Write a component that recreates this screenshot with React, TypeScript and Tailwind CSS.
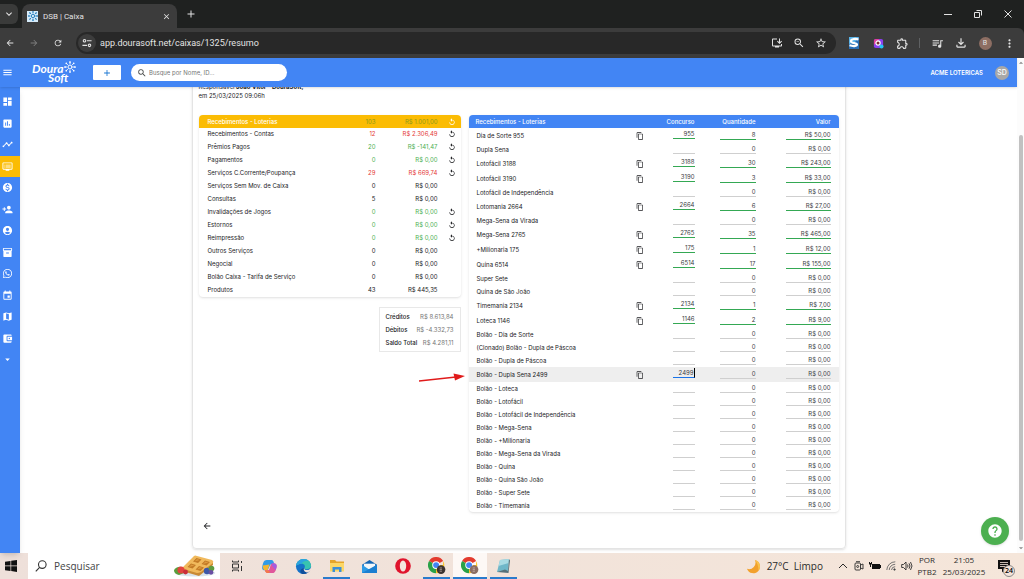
import { useState } from 'react';
import type { ReactNode } from 'react';
import {
  MdAccountBalanceWallet,
  MdAccountCircle,
  MdArrowBack,
  MdArrowDropDown,
  MdArrowDropUp,
  MdArrowForward,
  MdAssessment,
  MdClose,
  MdContentCopy,
  MdDashboard,
  MdDvr,
  MdEvent,
  MdHelp,
  MdInstallDesktop,
  MdInventory2,
  MdKeyboardArrowDown,
  MdMap,
  MdMenu,
  MdMonetizationOn,
  MdMoreVert,
  MdOutlineExtension,
  MdOutlineFileDownload,
  MdPersonAdd,
  MdQueueMusic,
  MdRefresh,
  MdReplay,
  MdSearch,
  MdStarOutline,
  MdTimeline,
  MdWhatsapp,
  MdZoomOut,
  MdAdd,
} from 'react-icons/md';
import clsx from 'clsx';

type Tone = 'header' | 'red' | 'green' | 'plain';

interface SummaryRow {
  name: string;
  qty: string;
  value: string;
  tone: Tone;
  replay?: boolean;
}

interface GameRow {
  name: string;
  contest?: string;
  qty?: string;
  value?: string;
  active?: boolean;
}

const summary: SummaryRow[] = [
  { name: 'Recebimentos - Contas', qty: '12', value: 'R$ 2.306,49', tone: 'red', replay: true },
  { name: 'Prêmios Pagos', qty: '20', value: 'R$ -141,47', tone: 'green', replay: true },
  { name: 'Pagamentos', qty: '0', value: 'R$ 0,00', tone: 'green', replay: true },
  { name: 'Serviços C.Corrente/Poupança', qty: '29', value: 'R$ 669,74', tone: 'red', replay: true },
  { name: 'Serviços Sem Mov. de Caixa', qty: '0', value: 'R$ 0,00', tone: 'plain' },
  { name: 'Consultas', qty: '5', value: 'R$ 0,00', tone: 'plain' },
  { name: 'Invalidações de Jogos', qty: '0', value: 'R$ 0,00', tone: 'green', replay: true },
  { name: 'Estornos', qty: '0', value: 'R$ 0,00', tone: 'green', replay: true },
  { name: 'Reimpressão', qty: '0', value: 'R$ 0,00', tone: 'green', replay: true },
  { name: 'Outros Serviços', qty: '0', value: 'R$ 0,00', tone: 'plain' },
  { name: 'Negocial', qty: '0', value: 'R$ 0,00', tone: 'plain' },
  { name: 'Bolão Caixa - Tarifa de Serviço', qty: '0', value: 'R$ 0,00', tone: 'plain' },
  { name: 'Produtos', qty: '43', value: 'R$ 445,35', tone: 'plain' },
];

const games: GameRow[] = [
  { name: 'Dia de Sorte 955', contest: '955', qty: '8', value: 'R$ 50,00' },
  { name: 'Dupla Sena' },
  { name: 'Lotofácil 3188', contest: '3188', qty: '30', value: 'R$ 243,00' },
  { name: 'Lotofácil 3190', contest: '3190', qty: '3', value: 'R$ 33,00' },
  { name: 'Lotofácil de Independência' },
  { name: 'Lotomania 2664', contest: '2664', qty: '6', value: 'R$ 27,00' },
  { name: 'Mega-Sena da Virada' },
  { name: 'Mega-Sena 2765', contest: '2765', qty: '35', value: 'R$ 465,00' },
  { name: '+Milionaria 175', contest: '175', qty: '1', value: 'R$ 12,00' },
  { name: 'Quina 6514', contest: '6514', qty: '17', value: 'R$ 155,00' },
  { name: 'Super Sete' },
  { name: 'Quina de São João' },
  { name: 'Timemania 2134', contest: '2134', qty: '1', value: 'R$ 7,00' },
  { name: 'Loteca 1146', contest: '1146', qty: '2', value: 'R$ 9,00' },
  { name: 'Bolão - Dia de Sorte' },
  { name: '(Clonado) Bolão - Dupla de Páscoa' },
  { name: 'Bolão - Dupla de Páscoa' },
  { name: 'Bolão - Dupla Sena 2499', contest: '2499', active: true },
  { name: 'Bolão - Loteca' },
  { name: 'Bolão - Lotofácil' },
  { name: 'Bolão - Lotofácil de Independência' },
  { name: 'Bolão - Mega-Sena' },
  { name: 'Bolão - +Milionaria' },
  { name: 'Bolão - Mega-Sena da Virada' },
  { name: 'Bolão - Quina' },
  { name: 'Bolão - Quina São João' },
  { name: 'Bolão - Super Sete' },
  { name: 'Bolão - Timemania' },
];

const menu = [
  { label: 'Painel', icon: MdDashboard },
  { label: 'Relatórios', icon: MdAssessment },
  { label: 'Desempenho', icon: MdTimeline },
  { label: 'Caixas', icon: MdDvr },
  { label: 'Financeiro', icon: MdMonetizationOn },
  { label: 'Novo cliente', icon: MdPersonAdd },
  { label: 'Conta', icon: MdAccountCircle },
  { label: 'Estoque', icon: MdInventory2 },
  { label: 'WhatsApp', icon: MdWhatsapp },
  { label: 'Agenda', icon: MdEvent },
  { label: 'Mapa', icon: MdMap },
  { label: 'Carteira', icon: MdAccountBalanceWallet },
  { label: 'Mais', icon: MdArrowDropDown },
];

const toneClass: Record<Tone, string> = {
  header: 'text-[#8a9a1c]',
  red: 'text-[#e53935]',
  green: 'text-[#4caf50]',
  plain: 'text-[#202124]',
};

function Sun({ className }: { className?: string }) {
  return (
    <svg viewBox="0 0 24 24" className={className} fill="none" stroke="currentColor" strokeWidth="2" strokeLinecap="round">
      <circle cx="12" cy="12" r="4" />
      <path d="M12 5V2M12 22v-3M5 12H2M22 12h-3M7 7 4.6 4.6M19.4 19.4 17 17M17 7l2.4-2.4M4.6 19.4 7 17" />
      <g fill="currentColor" stroke="none">
        <circle cx="12" cy="2" r="1.7" />
        <circle cx="12" cy="22" r="1.7" />
        <circle cx="2" cy="12" r="1.7" />
        <circle cx="22" cy="12" r="1.7" />
        <circle cx="4.6" cy="4.6" r="1.7" />
        <circle cx="19.4" cy="19.4" r="1.7" />
        <circle cx="19.4" cy="4.6" r="1.7" />
        <circle cx="4.6" cy="19.4" r="1.7" />
      </g>
    </svg>
  );
}

function IconButton({ label, className, children }: { label: string; className?: string; children: ReactNode }) {
  return (
    <button type="button" aria-label={label} className={clsx('flex shrink-0 items-center justify-center', className)}>
      {children}
    </button>
  );
}

function BrowserBar() {
  return (
    <div className="shrink-0 bg-[#1f2120] font-['Roboto',sans-serif] text-[#e3e3e3]">
      <div className="flex h-7 items-end">
        <IconButton label="Pesquisar guias" className="mb-1 h-5 w-[18px] rounded-r-md bg-[#3a3b3a]">
          <MdKeyboardArrowDown className="size-3" />
        </IconButton>
        <div className="ml-1 flex h-6 w-[155px] items-center rounded-t-lg bg-[#3c3c3c] pl-[5px]">
          <span className="flex size-[11px] items-center justify-center bg-[#d5ebfa] text-[#1976b8]">
            <Sun className="size-[10px]" />
          </span>
          <span className="ml-[5px] flex-1 text-[8px]">DSB | Caixa</span>
          <IconButton label="Fechar guia" className="mr-[6px]">
            <MdClose className="size-[9px]" />
          </IconButton>
        </div>
        <IconButton label="Nova guia" className="mb-2 ml-2">
          <MdAdd className="size-3" />
        </IconButton>
        <div className="ml-auto flex h-7 pr-px">
          <IconButton label="Minimizar" className="w-[30px]">
            <svg viewBox="0 0 8 8" className="size-2" stroke="currentColor">
              <path d="M0 4.5h8" />
            </svg>
          </IconButton>
          <IconButton label="Restaurar" className="w-[30px]">
            <svg viewBox="0 0 8 8" className="size-2" stroke="currentColor" fill="none">
              <path d="M.5 2.5h5v5h-5zM2.5.5h5v5" />
            </svg>
          </IconButton>
          <IconButton label="Fechar" className="w-[30px]">
            <svg viewBox="0 0 8 8" className="size-2" stroke="currentColor">
              <path d="M.5.5l7 7M7.5.5l-7 7" />
            </svg>
          </IconButton>
        </div>
      </div>
      <div className="flex h-[30px] items-center rounded-tr-md bg-[#3c3c3c] pr-[3px] pl-[5px]">
        <div className="mr-[13px] flex gap-[14px]">
          <IconButton label="Voltar">
            <MdArrowBack className="size-[10px]" />
          </IconButton>
          <IconButton label="Avançar" className="text-[#7d7d7d]">
            <MdArrowForward className="size-[10px]" />
          </IconButton>
          <IconButton label="Recarregar">
            <MdRefresh className="size-[10px]" />
          </IconButton>
        </div>
        <div className="flex h-[22px] min-w-0 flex-1 items-center rounded-full bg-[#282828] pr-1 pl-[2px]">
          <IconButton label="Informações do site" className="size-[18px] rounded-full bg-[#3c3c3c]">
            <svg viewBox="0 0 12 12" className="size-[10px]" fill="none" stroke="currentColor" strokeWidth="1.3">
              <circle cx="3" cy="3.2" r="1.5" />
              <circle cx="9" cy="8.8" r="1.5" />
              <path d="M6 3.2h5.5M.5 8.8H6" />
            </svg>
          </IconButton>
          <input
            aria-label="Endereço"
            defaultValue="app.dourasoft.net/caixas/1325/resumo"
            className="ml-1 min-w-0 flex-1 bg-transparent text-[9px] outline-none"
          />
          <IconButton label="Instalar aplicativo" className="w-[22px]">
            <MdInstallDesktop className="size-3" />
          </IconButton>
          <IconButton label="Zoom" className="w-[22px]">
            <MdZoomOut className="size-3" />
          </IconButton>
          <IconButton label="Favoritar" className="w-[22px]">
            <MdStarOutline className="size-3" />
          </IconButton>
        </div>
        <div className="ml-[6px] flex h-4 items-center">
          <IconButton label="Extensão S" className="w-6">
            <svg viewBox="0 0 12 12" className="size-3">
              <path d="M1 0h10v12H1z" fill="#2b6fb5" />
              <path d="M1 0h10L7 5 1 7z" fill="#5bb4e8" />
              <path d="M10.5 2.6C8 1.6 3 1.5 3 4.2c0 2.5 6 1.3 6 3.4 0 1.9-4.5 1.7-7.5.7" fill="none" stroke="#fff" strokeWidth="2.2" />
            </svg>
          </IconButton>
          <IconButton label="Captura" className="w-6">
            <svg viewBox="0 0 12 12" className="size-[11px]">
              <rect x="1" y="1" width="10" height="10" rx="2" fill="#8a3ff0" />
              <path d="M1 8V3a2 2 0 0 1 2-2h4z" fill="#e0409a" />
              <circle cx="5.5" cy="5.5" r="2.3" fill="#7a3030" stroke="#fff" strokeWidth="1.3" />
              <circle cx="9.3" cy="9.3" r="2.2" fill="#27c4f5" />
            </svg>
          </IconButton>
          <IconButton label="Extensões" className="w-6">
            <MdOutlineExtension className="size-[13px]" />
          </IconButton>
          <span className="mx-[5px] h-[10px] w-px bg-[#5f6163]" />
          <IconButton label="Controle de mídia" className="w-6">
            <MdQueueMusic className="size-[13px]" />
          </IconButton>
          <IconButton label="Downloads" className="w-6">
            <MdOutlineFileDownload className="size-[14px]" />
          </IconButton>
          <button type="button" aria-label="Perfil B" className="flex w-6 justify-center">
            <span className="flex size-[13px] items-center justify-center rounded-full bg-[#8d6e63] text-[7px]">B</span>
          </button>
          <IconButton label="Menu do navegador" className="w-6">
            <MdMoreVert className="size-[13px]" />
          </IconButton>
        </div>
      </div>
    </div>
  );
}

function AppHeader() {
  return (
    <header className="relative z-10 flex h-[29px] shrink-0 items-center bg-[#4285f4] pr-2 pl-[2px] text-white shadow-sm">
      <IconButton label="Menu">
        <MdMenu className="size-[11px]" />
      </IconButton>
      <a href="#inicio" aria-label="DouraSoft" className="ml-[19px] w-[61px] font-['Lato',sans-serif] text-xs leading-[9px] font-bold italic">
        <span className="flex h-[9px] items-center">
          Doura
          <Sun className="-mt-[2px] size-3 shrink-0" />
        </span>
        <span className="block pl-4">Soft</span>
      </a>
      <IconButton label="Adicionar" className="h-[15px] w-7 rounded-[1px] bg-white text-[#1976d2]">
        <MdAdd className="size-[10px]" />
      </IconButton>
      <label className="ml-[10px] flex h-[17px] w-[156px] items-center rounded-full bg-white pr-2 pl-[6px]">
        <MdSearch className="size-[10px] shrink-0 text-[#444746]" />
        <input
          aria-label="Busque por Nome, ID"
          placeholder="Busque por Nome, ID..."
          className="ml-[2px] min-w-0 flex-1 text-[6px] outline-none placeholder:text-[#757575]"
        />
      </label>
      <span className="ml-auto text-[6px] font-semibold">ACME LOTERICAS</span>
      <span className="ml-3 flex size-[14px] items-center justify-center rounded-full bg-[#a8a8a8] text-[7px] font-medium">SD</span>
    </header>
  );
}

function Sidebar() {
  return (
    <nav className="w-5 shrink-0 bg-[#4285f4] pt-1 shadow-md">
      <ul className="flex h-[279px] flex-col justify-between">
        {menu.map(({ label, icon: Icon }) => (
          <li key={label}>
            <a
              href="#menu"
              aria-label={label}
              className={clsx('flex h-[21px] items-center pl-[2px] text-white', label === 'Caixas' && 'bg-[#fbbc04]')}
            >
              <Icon className="size-[11px]" />
            </a>
          </li>
        ))}
      </ul>
    </nav>
  );
}

function SummaryTable() {
  return (
    <table className="w-full table-fixed rounded-sm shadow">
      <colgroup>
        <col />
        <col className="w-10" />
        <col className="w-[62px]" />
        <col className="w-[23px]" />
      </colgroup>
      <thead>
        <tr className="h-[13px]">
          <th className="rounded-tl-sm bg-[#fbbc04] pl-[9px] text-left font-medium text-white">Recebimentos - Loterias</th>
          <th className={clsx('bg-[#fbbc04] text-right font-normal', toneClass.header)}>103</th>
          <th className={clsx('bg-[#fbbc04] text-right font-normal', toneClass.header)}>R$ 1.001,00</th>
          <th className="rounded-tr-sm bg-[#fbbc04] text-white">
            <IconButton label="Recarregar loterias" className="ml-[10px]">
              <MdReplay className="size-2" />
            </IconButton>
          </th>
        </tr>
      </thead>
      <tbody>
        {summary.map((row) => (
          <tr key={row.name} className="h-[13px] align-top leading-3">
            <td className="pl-[9px]">{row.name}</td>
            <td className={clsx('text-right', toneClass[row.tone])}>{row.qty}</td>
            <td className={clsx('text-right', toneClass[row.tone])}>{row.value}</td>
            <td>
              {row.replay && (
                <IconButton label={'Recarregar ' + row.name} className="mt-[2px] ml-[10px]">
                  <MdReplay className="size-2" />
                </IconButton>
              )}
            </td>
          </tr>
        ))}
      </tbody>
    </table>
  );
}

function Totals() {
  const totals = [
    ['Créditos', 'R$ 8.613,84'],
    ['Débitos', 'R$ -4.332,73'],
    ['Saldo Total', 'R$ 4.281,11'],
  ];
  return (
    <dl className="mt-[10px] ml-auto w-[82px] border border-[#e8e8e8] px-[6px] py-[2px]">
      {totals.map(([label, value]) => (
        <div key={label} className="flex h-[13px] items-center justify-between whitespace-nowrap">
          <dt className="font-medium">{label}</dt>
          <dd className="text-[#757575]">{value}</dd>
        </div>
      ))}
    </dl>
  );
}

function GamesTable() {
  const [rows, setRows] = useState(games);

  const handleContest = (index: number, contest: string) => {
    setRows(rows.map((row, i) => (i === index ? { ...row, contest } : row)));
  };

  return (
    <table className="w-full table-fixed rounded-sm shadow">
      <colgroup>
        <col />
        <col className="w-3" />
        <col className="w-12" />
        <col className="w-[61px]" />
        <col className="w-[83px]" />
      </colgroup>
      <thead>
        <tr className="h-[13px] text-white">
          <th colSpan={2} className="rounded-tl-sm bg-[#4285f4] pl-[7px] text-left font-medium">
            Recebimentos - Loterias
          </th>
          <th className="bg-[#4285f4] text-right font-medium">Concurso</th>
          <th className="bg-[#4285f4] text-right font-medium">Quantidade</th>
          <th className="rounded-tr-sm bg-[#4285f4] pr-2 text-right font-medium">Valor</th>
        </tr>
      </thead>
      <tbody>
        {rows.map((row, index) => {
          const filled = Boolean(row.qty);
          const tall = filled || row.active;
          const border = filled ? 'border-[#34a853]' : 'border-[#cfcfcf]';
          return (
            <tr key={row.name} className={clsx(tall ? 'h-[15px]' : 'h-[13px]', row.active && 'bg-[#eeeeee]')}>
              <td className="pl-2">{row.name}</td>
              <td>
                {tall && (
                  <IconButton label={'Copiar ' + row.name} className="mx-auto">
                    <MdContentCopy className="size-2" />
                  </IconButton>
                )}
              </td>
              <td className="pt-px align-top">
                <input
                  aria-label={'Concurso ' + row.name}
                  value={row.contest ?? ''}
                  onChange={(e) => handleContest(index, e.target.value)}
                  className={clsx(
                    'ml-auto block h-[10px] w-[22px] border-b text-right text-[#3c4043] outline-none',
                    row.active ? 'border-r border-r-black border-b-[#1a73e8]' : border
                  )}
                />
              </td>
              <td className={clsx('align-top', tall ? 'pt-[2px]' : 'pt-px')}>
                <input
                  aria-label={'Quantidade ' + row.name}
                  defaultValue={row.qty ?? '0'}
                  className={clsx('ml-auto block h-[10px] w-9 border-b text-right text-[#3c4043] outline-none', border)}
                />
              </td>
              <td className={clsx('pr-2 align-top', tall ? 'pt-[2px]' : 'pt-px')}>
                <input
                  aria-label={'Valor ' + row.name}
                  defaultValue={row.value ?? 'R$ 0,00'}
                  className={clsx('ml-auto block h-[10px] w-[45px] border-b text-right text-[#3c4043] outline-none', border)}
                />
              </td>
            </tr>
          );
        })}
      </tbody>
    </table>
  );
}

function ChromeLogo({ badge }: { badge: string }) {
  return (
    <svg viewBox="0 0 20 20" className="size-[18px]">
      <path d="M9 9 1.2 4.5A9 9 0 0 1 16.8 4.5z" fill="#e33b2e" />
      <path d="M9 9V18A9 9 0 0 1 1.2 4.5z" fill="#2aa148" />
      <path d="M9 9h7.8V4.5A9 9 0 0 1 9 18z" fill="#fcc31e" />
      <circle cx="9" cy="9" r="4.3" fill="#fff" />
      <circle cx="9" cy="9" r="3.3" fill="#4285f4" />
      <circle cx="14.5" cy="14" r="4.8" fill={badge} />
      <path d="M13 12.2h2.5M13 14h2.5M13 15.8h2.5" stroke="#d8c6bf" strokeWidth=".7" />
    </svg>
  );
}

function Waffle() {
  return (
    <svg viewBox="0 0 43 22" className="h-[22px] w-[43px]">
      <ellipse cx="22" cy="18" rx="20" ry="3.5" fill="#d9e3ec" />
      <path d="M1 15q3-4 8-3l2 6-5 2q-5-1-5-5z" fill="#5b9e3d" />
      <path d="M9 13v3l17 5L40 10V7z" fill="#c98a35" />
      <path d="M9 13 21 1q1-1 3 0l15 4q2 1 1 3L28 17q-2 1-4 1l-14-4z" fill="#f0b95c" />
      <path d="M14.5 12l3.5-3.5 5 1.5-3.5 3.5zM20 6.5 23.500 3l5 1.500L25 8zM22.500 14.500 26 11l5 1.500-3.500 3.500zM28.500 9 32 5.500l5 1.500-3.500 3.500z" fill="#c27a26" />
      <path d="M16 12l2.500-2.500 3 1zM21.500 6.500 24 4l3 1zM24 14.500l2.500-2.500 3 1zM30 9l2.500-2.500 3 1z" fill="#dd9a3e" />
      <circle cx="8" cy="15" r="3.600" fill="#e2443f" />
      <circle cx="12.500" cy="17" r="2.400" fill="#c92f3a" />
      <circle cx="34" cy="16" r="3.200" fill="#3d58a8" />
      <circle cx="38.500" cy="13.500" r="2.800" fill="#5d9b3f" />
      <circle cx="38" cy="17.300" r="2.400" fill="#6a4fa3" />
    </svg>
  );
}

function Taskbar() {
  const apps = [
    {
      label: 'Visão de tarefas',
      icon: (
        <svg viewBox="0 0 12 12" className="size-3" fill="none" stroke="#333">
          <path d="M1.5.5V2h6V.5M1.5 11.5V10h6v1.5M1.5 4h6v4h-6zM10.5 1v2M10.5 6v5" />
        </svg>
      ),
    },
    {
      label: 'Copilot',
      icon: (
        <svg viewBox="0 0 18 18" className="size-[17px]">
          <path d="M6 2h5c2 0 2.5 2 3 4l-4 1-3 6H4c-3 0-3-2-2.500-4.500C2.200 5 3 2 6 2z" fill="#2f9be8" />
          <path d="M2 8c0 3 .5 5 2.500 5H7l2-6z" fill="#f2b632" />
          <path d="M12 16H7c-2 0-2.500-2-3-3h3c2 0 2.200-2 3-5 .4-1.500 1-2.500 3-2.500 3 0 4 1.500 3.500 4C15.800 13 15 16 12 16z" fill="#e0569b" />
          <path d="M12 5.500c3 0 5 .5 4.500 4l-1 3.500-4-5z" fill="#a35de0" />
          <path d="M4 13h3l3 1.500L8 16H7c-2 0-2.500-2-3-3z" fill="#f47a45" />
        </svg>
      ),
    },
    {
      label: 'Edge',
      icon: (
        <svg viewBox="0 0 18 18" className="size-[17px]">
          <circle cx="9" cy="9" r="8" fill="#1573c9" />
          <path d="M1.200 8C2 3.500 5.500 1 9.200 1 14 1 17 4.500 17 8c0 3-2.500 4-5 4-2 0-2.500-1-1.800-2 .8-1.500-.2-4-3.200-4-3 0-5.500 2-5.800 2z" fill="#38c3b0" />
          <path d="M1.200 8C2 3.500 5.500 1 9.200 1c2 0 4 .8 5.300 2C11 2.500 8 4 7 6 4 6 1.500 8 1.200 8z" fill="#2ba3e0" />
          <path d="M9.800 10.500c-.8 1.500 1 3 3.400 3 1.200 0 2.300-.5 3-.8C14.500 15.500 12 17 9 17c-4 0-5-6 .8-6.500z" fill="#0f4f9c" />
          <path d="M9.800 10.200c-.5 1.500.6 2.600 2.800 2.600 2 0 4.400-1.400 4.400-2.800v3l-3 2.200C11 15.500 8 13 9.800 10.200z" fill="#efe2dc" />
        </svg>
      ),
    },
    {
      label: 'Explorador de Arquivos',
      running: true,
      icon: (
        <svg viewBox="0 0 16 14" className="h-[14px] w-4">
          <path d="M1 1h5l1.500 1.500H15V12H1z" fill="#e5a52b" />
          <path d="M1 4h14v8.500H1z" fill="#fcd766" />
          <path d="M3.500 13V8h9v5H10v-2.500H6V13z" fill="#3b8fd8" />
        </svg>
      ),
    },
    {
      label: 'Email',
      icon: (
        <svg viewBox="0 0 18 16" className="h-[15px] w-[17px]">
          <path d="M1 6 9 1l8 5v9H1z" fill="#1466b5" />
          <path d="M3 5h12v6H3z" fill="#f3f7fa" />
          <path d="M1 6l8 5.500L17 6v9H1z" fill="#2d9be6" />
          <path d="M1 15l16-9v9z" fill="#1b7fd1" />
        </svg>
      ),
    },
    {
      label: 'Opera',
      icon: (
        <svg viewBox="0 0 16 16" className="size-4">
          <circle cx="8" cy="8" r="7.8" fill="#e0142d" />
          <ellipse cx="8" cy="8" rx="3.2" ry="5.6" fill="#f3e4df" />
        </svg>
      ),
    },
    { label: 'Chrome', running: true, icon: <ChromeLogo badge="#3b3330" /> },
    { label: 'Chrome B', running: true, active: true, icon: <ChromeLogo badge="#8d6e63" /> },
    {
      label: 'Bloco de Notas',
      running: true,
      icon: (
        <svg viewBox="0 0 16 16" className="size-4">
          <path d="M5 2l9-1-1 12-11 1z" fill="#6fb7c9" />
          <path d="M5 2l9-1-.4 4L3.500 8z" fill="#a9dbe4" />
          <path d="M2 14l8-2.500L13 13l1-12 1 1.500L13.500 15z" fill="#55707a" />
        </svg>
      ),
    },
  ];

  return (
    <footer className="flex h-[26px] shrink-0 items-center bg-linear-to-r from-[#eee0da] to-[#f5e6da] font-['Open_Sans',sans-serif] text-[#2b2b2b]">
      <IconButton label="Iniciar" className="h-full w-[28px] pr-[6px]">
        <svg viewBox="0 0 12 12" className="size-3" fill="#111">
          <path d="M0 1.700 5.500.9v4.700H0zM6.200.8 12 0v5.600H6.200zM0 6.300h5.500V11L0 10.300zM6.200 6.300H12V12l-5.800-.9z" />
        </svg>
      </IconButton>
      <label className="flex h-full w-[192px] items-center bg-white pr-1 pl-[7px]">
        <svg viewBox="0 0 12 12" className="size-3 shrink-0" fill="none" stroke="#333" strokeWidth="1.1">
          <circle cx="7.3" cy="4.6" r="3.8" />
          <path d="M4.6 7.4.8 11.4" />
        </svg>
        <input
          aria-label="Pesquisar"
          placeholder="Pesquisar"
          className="ml-[7px] min-w-0 flex-1 text-[10px] outline-none placeholder:text-[#444]"
        />
        <Waffle />
      </label>
      <div className="grid h-full w-[300px] grid-cols-9">
        {apps.map((app) => (
          <button
            key={app.label}
            type="button"
            aria-label={app.label}
            className={clsx('relative flex items-center justify-center', app.active && 'bg-[#fdf8f5]')}
          >
            {app.icon}
            {app.running && (
              <span className={clsx('absolute bottom-0 h-[2px] bg-[#2a7bcc]', app.active ? 'inset-x-0' : 'inset-x-[3px]')} />
            )}
          </button>
        ))}
      </div>
      <div className="ml-auto flex items-center pr-[5px]">
        <svg viewBox="0 0 16 16" className="size-[15px]">
          <path d="M9.500 1A7.200 7.200 0 1 1 1 10.500 7 7 0 0 0 9.500 1z" fill="#f2a12c" />
          <path d="M9.500 1a7.200 7.200 0 0 1 3.800 11.500C13.500 8 12 4 9.500 1z" fill="#f9c34d" />
        </svg>
        <span className="mr-3 ml-[6px] text-[10px] whitespace-nowrap">27°C&nbsp; Limpo</span>
        <IconButton label="Mostrar ícones ocultos" className="w-4">
          <svg viewBox="0 0 10 10" className="size-[10px]" fill="none" stroke="currentColor">
            <path d="M1 7l4-4 4 4" />
          </svg>
        </IconButton>
        <IconButton label="Câmera" className="w-4">
          <svg viewBox="0 0 10 10" className="size-[10px]" fill="none" stroke="currentColor" strokeWidth=".9">
            <rect x="1" y="2" width="5.5" height="7" rx="1" />
            <path d="M6.500 4 9 3v5L6.500 7M2 .7h4" />
            <circle cx="3.700" cy="5.500" r="1" />
          </svg>
        </IconButton>
        <IconButton label="Bateria" className="w-4">
          <svg viewBox="0 0 12 10" className="h-[10px] w-3" fill="#111">
            <path d="M3 3h8v1h1v3h-1v1H3zM0 1h1v1h1V1h1v2L2 4v2H1V4L0 3z" />
          </svg>
        </IconButton>
        <IconButton label="Wi-Fi" className="w-4">
          <svg viewBox="0 0 10 10" className="size-[10px]" fill="none" stroke="#666" strokeWidth=".9">
            <path d="M.8 9A8.500 8.500 0 0 1 9.300.8M3.200 9a6 6 0 0 1 6-5.700M5.500 9A3.700 3.700 0 0 1 9.200 5.700" />
            <circle cx="8.500" cy="8.500" r=".8" fill="#222" />
          </svg>
        </IconButton>
        <IconButton label="Volume" className="w-4">
          <svg viewBox="0 0 12 10" className="h-[10px] w-3" fill="none" stroke="currentColor" strokeWidth=".9">
            <path d="M.7 3.500h1.800L5 1v8L2.500 6.500H.7zM6.500 3.500q1 1.500 0 3M8 2.300q2 2.700 0 5.400M9.500 1q3 4 0 8" />
          </svg>
        </IconButton>
        <div className="w-6 text-center text-[8px] leading-3">
          <div>POR</div>
          <div>PTB2</div>
        </div>
        <div className="w-[50px] text-center text-[8px] leading-3">
          <div>21:05</div>
          <div>25/03/2025</div>
        </div>
        <button type="button" aria-label="Notificações" className="relative flex w-[30px] justify-center">
          <svg viewBox="0 0 12 13" className="h-[13px] w-3">
            <path d="M0 0h12v9H7l-3 3.500V9H0z" fill="#111" />
            <path d="M2 2.500h8M2 4.500h8M2 6.500h5" stroke="#f3e4da" strokeWidth=".8" />
          </svg>
          <span className="absolute top-[5px] left-[14px] flex size-3 items-center justify-center rounded-full border border-[#888] bg-[#f3e4da] text-[7px] font-semibold text-black">
            24
          </span>
        </button>
      </div>
    </footer>
  );
}

export default function App() {
  return (
    <div className="flex h-screen flex-col overflow-hidden bg-white font-['Inter',sans-serif] text-[6px] leading-[9px] text-[#202124]">
      <BrowserBar />
      <div className="flex min-h-0 flex-1">
        <div className="relative flex min-w-0 flex-1 flex-col">
          <AppHeader />
          <div className="flex min-h-0 flex-1">
            <Sidebar />
            <main className="flex min-w-0 flex-1 flex-col justify-end overflow-hidden pb-1">
              <section className="relative mx-auto w-full max-w-[654px] rounded-sm border border-[#e4e4e4] px-[6px] shadow-sm">
                <p>
                  Responsável <b className="font-bold">João Vitor - DouraSoft,</b>
                </p>
                <p>em 25/03/2025 09:06h</p>
                <div className="relative mt-[15px] grid grid-cols-[262fr_370fr] items-start gap-2">
                  <div>
                    <SummaryTable />
                    <Totals />
                  </div>
                  <GamesTable />
                  {/* marks the contest being edited */}
                  <svg viewBox="0 0 50 10" className="absolute top-[257px] left-[219px] h-[10px] w-[50px]" fill="#e01b1b">
                    <path d="M1 9 38 5" stroke="#e01b1b" strokeWidth="1.7" />
                    <path d="M35.500 1.500 47 4 37 8.500z" />
                  </svg>
                </div>
                <IconButton label="Voltar para caixas" className="mt-[9px] mb-[17px] ml-[3px]">
                  <MdArrowBack className="size-[10px]" />
                </IconButton>
              </section>
            </main>
          </div>
          <button
            type="button"
            aria-label="Ajuda"
            className="absolute right-2 bottom-2 flex size-7 items-center justify-center rounded-full bg-[#4caf50] text-white shadow"
          >
            <MdHelp className="size-4" />
          </button>
        </div>
        <div aria-hidden="true" className="flex w-[7px] shrink-0 flex-col items-center justify-between bg-[#fcfcfc] text-[#8b8b8b]">
          <MdArrowDropUp className="size-[10px]" />
          <div className="mt-auto mb-[2px] h-[82%] w-1 rounded-full bg-[#c1c1c1]" />
          <MdArrowDropDown className="size-[10px]" />
        </div>
      </div>
      <Taskbar />
    </div>
  );
}
